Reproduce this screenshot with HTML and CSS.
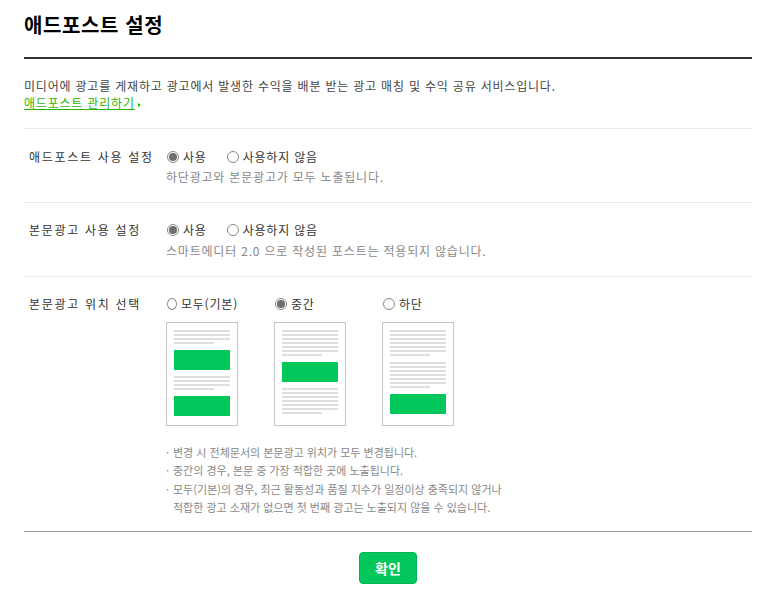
FILE: index.html
```html
<!DOCTYPE html>
<html lang="ko">
<head>
<meta charset="utf-8">
<title>애드포스트 설정</title>
<link rel="stylesheet" href="styles.css">
</head>
<body>
<div class="wrap">
  <div class="header">
    <h1 class="title">애드포스트 설정</h1>
  </div>
  <div class="intro">
    <p class="desc">미디어에 광고를 게재하고 광고에서 발생한 수익을 배분 받는 광고 매칭 및 수익 공유 서비스입니다.</p>
    <p class="link-line"><a class="manage-link" href="#">애드포스트 관리하기</a><span class="arrow"></span></p>
  </div>

  <div class="row row-first">
    <div class="label">애드포스트 사용 설정</div>
    <div class="field">
      <div class="options">
        <label class="opt"><span class="radio checked"></span>사용</label>
        <label class="opt"><span class="radio"></span>사용하지 않음</label>
      </div>
      <p class="hint">하단광고와 본문광고가 모두 노출됩니다.</p>
    </div>
  </div>

  <div class="row">
    <div class="label">본문광고 사용 설정</div>
    <div class="field">
      <div class="options">
        <label class="opt"><span class="radio checked"></span>사용</label>
        <label class="opt"><span class="radio"></span>사용하지 않음</label>
      </div>
      <p class="hint hint-2">스마트에디터 2.0 으로 작성된 포스트는 적용되지 않습니다.</p>
    </div>
  </div>

  <div class="row row-last">
    <div class="label">본문광고 위치 선택</div>
    <div class="field">
      <div class="positions">
        <div class="pos">
          <label class="opt"><span class="radio"></span>모두(기본)</label>
          <div class="card">
            <div class="lines"><i></i><i></i><i></i><i class="short"></i></div>
            <div class="ad"></div>
            <div class="lines"><i></i><i></i><i></i><i class="short"></i></div>
            <div class="ad"></div>
          </div>
        </div>
        <div class="pos">
          <label class="opt"><span class="radio checked"></span>중간</label>
          <div class="card">
            <div class="lines"><i></i><i></i><i></i><i></i><i></i><i></i><i class="short"></i></div>
            <div class="ad"></div>
            <div class="lines"><i></i><i></i><i></i><i></i><i></i><i></i><i class="short"></i></div>
          </div>
        </div>
        <div class="pos">
          <label class="opt"><span class="radio"></span>하단</label>
          <div class="card">
            <div class="lines"><i></i><i></i><i></i><i></i><i></i><i></i><i class="short"></i></div>
            <div class="lines"><i></i><i></i><i></i><i></i><i></i><i></i><i class="short"></i></div>
            <div class="ad"></div>
          </div>
        </div>
      </div>
      <ul class="notes">
        <li>변경 시 전체문서의 본문광고 위치가 모두 변경됩니다.</li>
        <li>중간의 경우, 본문 중 가장 적합한 곳에 노출됩니다.</li>
        <li>모두(기본)의 경우, 최근 활동성과 품질 지수가 일정이상 충족되지 않거나<br>적합한 광고 소재가 없으면 첫 번째 광고는 노출되지 않을 수 있습니다.</li>
      </ul>
    </div>
  </div>

  <div class="footer">
    <button class="confirm" type="button">확인</button>
  </div>
</div>
</body>
</html>
```

FILE: styles.css
```css
html, body {
  margin: 0;
  padding: 0;
  background: #fff;
}
body {
  font-family: "Noto Sans CJK KR", "Noto Sans", "Liberation Sans", sans-serif;
  font-size: 12px;
  color: #333;
  letter-spacing: 0.8px;
}
.wrap {
  width: 728px;
  margin-left: 24px;
}
.header {
  padding: 13px 0 20px;
  border-bottom: 2px solid #333;
}
.title {
  margin: 0;
  font-size: 20px;
  line-height: 24px;
  font-weight: bold;
  color: #000;
  letter-spacing: 0.6px;
}
.intro {
  padding: 18px 0 17px;
}
.intro p {
  margin: 0;
  line-height: 17px;
}
.desc {
  color: #444;
}
.manage-link {
  color: #2db400;
  text-decoration: underline;
}
.arrow {
  display: inline-block;
  width: 0;
  height: 0;
  margin-left: 3px;
  vertical-align: 1px;
  border-top: 2px solid transparent;
  border-bottom: 2px solid transparent;
  border-left: 3px solid #2db400;
}
.row {
  display: flex;
  border-top: 1px solid #ebebeb;
  padding: 18px 0 16px;
}
.row-first {
  padding-top: 19px;
}
.row-last {
  padding-bottom: 15px;
}
.label {
  width: 137px;
  padding-left: 5px;
  line-height: 18px;
  letter-spacing: 1.7px;
  color: #333;
  white-space: nowrap;
}
.field {
  flex: 1;
}
.options {
  display: flex;
}
.opt {
  display: inline-flex;
  align-items: center;
  line-height: 18px;
  margin-right: 19px;
  color: #333;
}
.radio {
  box-sizing: border-box;
  width: 12px;
  height: 12px;
  margin: 0 4px 0 1px;
  border: 1px solid #8a8a8a;
  border-radius: 50%;
  background: #fff;
  display: inline-flex;
  align-items: center;
  justify-content: center;
}
.radio.checked::after {
  content: "";
  width: 8px;
  height: 8px;
  border-radius: 50%;
  background: #6e6e6e;
}
.hint {
  margin: 2px 0 0;
  line-height: 18px;
  color: #888;
}
.hint-2 {
  margin-top: 3px;
}
.positions {
  display: flex;
  gap: 36px;
}
.pos {
  width: 72px;
  display: flex;
  flex-direction: column;
}
.pos .opt {
  margin-right: 0;
  white-space: nowrap;
}
.card {
  box-sizing: border-box;
  width: 72px;
  height: 104px;
  margin-top: 9px;
  padding: 7px;
  border: 1px solid #c4c4c4;
  display: flex;
  flex-direction: column;
  gap: 6px;
}
.lines {
  display: flex;
  flex-direction: column;
  gap: 2px;
}
.lines i {
  display: block;
  height: 2px;
  width: 56px;
  background: #dedede;
}
.lines i.short {
  width: 40px;
}
.ad {
  height: 20px;
  background: #03c75a;
}
.notes {
  list-style: none;
  margin: 17px 0 0;
  padding: 0;
  color: #888;
  font-size: 11px;
  letter-spacing: 0;
}
.notes li {
  position: relative;
  padding-left: 7px;
  line-height: 18.3px;
}
.notes li::before {
  content: "·";
  position: absolute;
  left: 0;
  top: 0;
}
.footer {
  border-top: 1px solid #9a9a9a;
  padding-top: 20px;
  display: flex;
  justify-content: center;
}
.confirm {
  box-sizing: border-box;
  width: 58px;
  height: 32px;
  border: 1px solid #02b651;
  border-radius: 4px;
  background: #03c75a;
  color: #fff;
  font-family: inherit;
  font-size: 14px;
  font-weight: bold;
  letter-spacing: 0;
  padding: 0;
  cursor: pointer;
}
```
